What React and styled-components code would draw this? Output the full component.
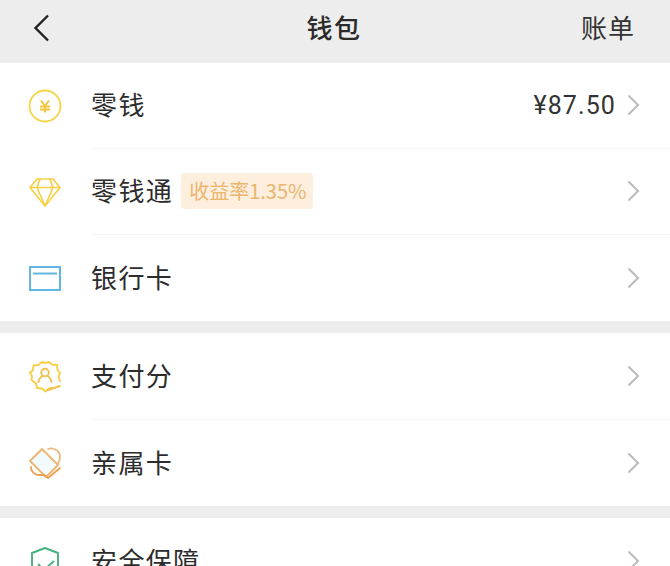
import React from "react";
import styled, { createGlobalStyle } from "styled-components";

const Global = createGlobalStyle`
  html, body { margin: 0; padding: 0; background: #ededed; }
  body { font-family: "Noto Sans CJK SC", "Liberation Sans", sans-serif; }
`;

const Page = styled.div`
  width: 670px;
  height: 566px;
  overflow: hidden;
  background: #ededed;
`;

const Header = styled.header`
  height: 62.500px;
  display: grid;
  grid-template-columns: 1fr auto 1fr;
  align-items: center;
  padding: 0 35px 6px 32px;
  box-sizing: border-box;
  background: #ededed;
  color: #222;
`;

const Back = styled.svg`
  width: 18px;
  height: 30px;
  display: block;
`;

const Title = styled.h1`
  margin: 0 0 3px 1px;
  font-size: 26px;
  font-weight: 500;
  letter-spacing: 1.500px;
  color: #2a2a2a;
`;

const HeaderLink = styled.div`
  justify-self: end;
  margin-bottom: 3px;
  font-size: 26px;
  font-weight: 400;
  letter-spacing: 1px;
  color: #333;
`;

const Section = styled.section`
  background: #fff;
  margin-bottom: 12px;
`;

const Row = styled.div`
  height: 86.300px;
  display: flex;
  align-items: center;
  padding-left: 28px;
  box-sizing: border-box;
`;

const IconBox = styled.div`
  width: 34px;
  height: 34px;
  flex: none;
  margin-right: 28px;
  svg { width: 34px; height: 34px; display: block; }
`;

const RowBody = styled.div`
  flex: 1;
  height: 100%;
  display: flex;
  align-items: center;
  padding-right: 30px;
  border-bottom: ${(p) => (p.$last ? "none" : "1px solid #f5f5f5")};
  box-sizing: border-box;
`;

const Label = styled.span`
  margin-left: 1px;
  padding-bottom: 3px;
  font-size: 26px;
  font-weight: 400;
  letter-spacing: 1.400px;
  color: #2c2c2c;
`;

const Badge = styled.span`
  margin-left: 8px;
  height: 36px;
  padding: 0 7px 0 8px;
  display: flex;
  align-items: center;
  border-radius: 4px;
  background: #fdeedd;
  color: #ebb56e;
  font-size: 20px;
  line-height: 1;
`;

const Value = styled.span`
  margin-left: auto;
  padding-top: 1px;
  font-family: "Roboto", "Liberation Sans", sans-serif;
  font-size: 25px;
  letter-spacing: 1.100px;
  color: #333;
`;

const Chevron = styled.svg`
  width: 13px;
  height: 22px;
  flex: none;
  margin-left: ${(p) => (p.$tight ? "11px" : "auto")};
`;

const CoinIcon = () => (
  <svg viewBox="0 0 34 34" fill="none" stroke="#f5d548" strokeWidth="1.800">
    <circle cx="17" cy="17" r="15.500" />
    <path d="M13 11.500l4 5.500 4-5.500M12 17.500h10M12 20.500h10M17 17v6.500" stroke="#f3c53c" strokeWidth="1.900" />
  </svg>
);

const DiamondIcon = () => (
  <svg viewBox="0 0 34 34" fill="none" stroke="#f5d040" strokeWidth="1.600" strokeLinejoin="round">
    <path d="M9 4h16l7 8.500-15 18.500L2 12.500z" />
    <path d="M2 12.500h30M12 4l-3 8.500 8 18.500 8-18.500-3-8.500" />
  </svg>
);

const CardIcon = () => (
  <svg viewBox="0 0 34 34" fill="none" stroke="#5cb3e0" strokeWidth="1.900">
    <rect x="2" y="6" width="30" height="23" />
    <path d="M5 12.500h24" />
  </svg>
);

const ScoreIcon = () => (
  <svg viewBox="0 0 34 34" fill="none" stroke="#f5cf45" strokeWidth="1.900" strokeLinejoin="round" strokeLinecap="round">
    <path d="M24 28l-3 .5-3.500 3-3.500-3-5-.5-1-4.500L3.500 20l.5-4-2-3 3-3 .5-4.500 5-.5L14 2l3 1 4-1 3 2.500 5 .5.500 5 2.500 3-1.500 4 1.500 4" />
    <circle cx="17" cy="12.500" r="3.800" stroke="#edc24e" />
    <path d="M10.500 22c.5-4 3-5.500 4-6M23.500 22c-.5-4-3-5.500-4-6M20 30l12-4" stroke="#edc24e" />
  </svg>
);

const FamilyCardIcon = () => (
  <svg viewBox="0 0 34 34" fill="none" strokeWidth="1.800" strokeLinejoin="round" strokeLinecap="round">
    <path d="M2 15L14 3l16 16-12 12z" fill="#f3fafd" stroke="#ecb56e" />
    <path d="M20 3c6-2 12 2 12 8 0 3-1 5-2 7" stroke="#e8b87c" />
    <path d="M3 21c0 5 4 8 8 8h5l4 3 12-10" stroke="#ee9f4c" />
  </svg>
);

const ShieldIcon = () => (
  <svg viewBox="0 0 34 34" fill="none" stroke="#45b27e" strokeWidth="1.900" strokeLinejoin="round">
    <path d="M17 4l13 5v11c0 6-6 10-13 13C10 30 4 26 4 20V9z" />
    <path d="M10 20l6 6 10-9" />
  </svg>
);

const rowsA = [
  { icon: <CoinIcon />, label: "零钱", value: "¥87.50" },
  { icon: <DiamondIcon />, label: "零钱通", badge: "收益率1.35%" },
  { icon: <CardIcon />, label: "银行卡" },
];

const rowsB = [
  { icon: <ScoreIcon />, label: "支付分" },
  { icon: <FamilyCardIcon />, label: "亲属卡" },
];

const rowsC = [{ icon: <ShieldIcon />, label: "安全保障" }];

const ListRow = ({ icon, label, badge, value, last }) => (
  <Row>
    <IconBox>{icon}</IconBox>
    <RowBody $last={last}>
      <Label>{label}</Label>
      {badge && <Badge>{badge}</Badge>}
      {value && <Value>{value}</Value>}
      <Chevron $tight={!!value} viewBox="0 0 13 22" fill="none" stroke="#bbb" strokeWidth="2">
        <path d="M1.500 1.500L11 11l-9.500 9.500" />
      </Chevron>
    </RowBody>
  </Row>
);

const Group = ({ rows }) => (
  <Section>
    {rows.map((r, i) => (
      <ListRow key={r.label} {...r} last={i === rows.length - 1} />
    ))}
  </Section>
);

export default function App() {
  return (
    <Page>
      <Global />
      <Header>
        <Back viewBox="0 0 18 30" fill="none" stroke="#222" strokeWidth="2.400">
          <path d="M16 2.500L3.500 15 16 27.500" />
        </Back>
        <Title>钱包</Title>
        <HeaderLink>账单</HeaderLink>
      </Header>
      <Group rows={rowsA} />
      <Group rows={rowsB} />
      <Group rows={rowsC} />
    </Page>
  );
}
